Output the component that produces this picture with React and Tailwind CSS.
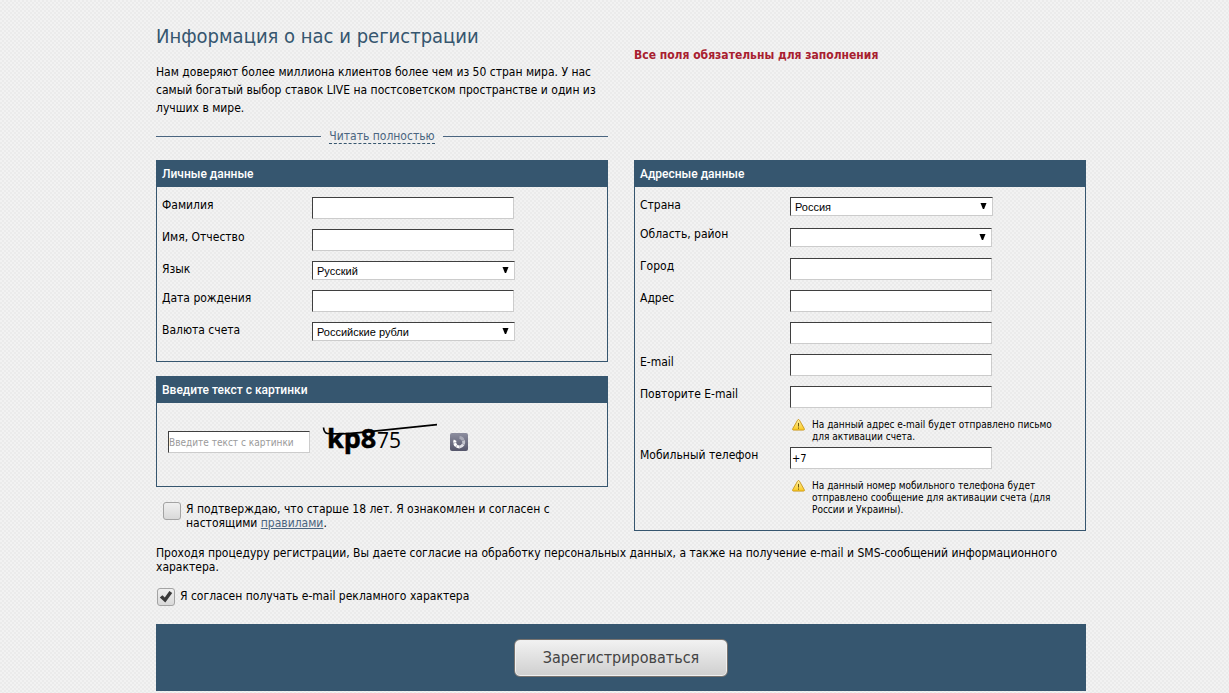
import React, { useState } from 'react';

const boxClass = 'block bg-white border border-t-[#3f3f3f] border-l-[#3f3f3f] border-r-[#cccccc] border-b-[#cccccc] outline-none';

function Panel({ title, className = '', children }) {
    return (
        <section className={`border border-[#36566f] ${className}`}>
            <h2 className="h-[26px] bg-[#36566f] px-[5px] text-xs leading-[26px] font-medium text-white font-['Roboto',sans-serif]">
                {title}
            </h2>
            {children}
        </section>
    );
}

function Row({ id, label, hint, children }) {
    return (
        <div className="flex items-start px-[5px]">
            <label htmlFor={id} className="w-[150px] shrink-0 leading-4">
                {label}
            </label>
            <div className="min-w-0 flex-1">
                <div className="mb-[10px]">{children}</div>
                {hint && <Hint>{hint}</Hint>}
            </div>
        </div>
    );
}

function TextInput(props) {
    return <input type="text" className={`${boxClass} h-[22px] w-[202px] px-px text-[11px]`} {...props} />;
}

function Select({ id, options, className = 'w-[203px]' }) {
    return (
        <div className={`relative ${className}`}>
            <select
                id={id}
                className={`${boxClass} h-[19px] w-full appearance-none px-1 text-[11px] leading-4 text-black font-['Liberation_Sans',sans-serif]`}
            >
                {options.map(option => (
                    <option key={option}>{option}</option>
                ))}
            </select>
            <svg className="pointer-events-none absolute top-[6px] right-[6px]" width="7" height="6" viewBox="0 0 7 6">
                <path d="M.5 0h6L4.100 6H2.900z" fill="#000" />
            </svg>
        </div>
    );
}

function Hint({ children }) {
    return (
        <div className="flex items-start pt-px pb-1 pl-[2px]">
            <svg className="mr-[7px] shrink-0" width="13" height="12" viewBox="0 0 13 12">
                <defs>
                    <linearGradient id="warn" x1="0" y1="0" x2="0" y2="1">
                        <stop offset="0" stopColor="#fff3a8" />
                        <stop offset="1" stopColor="#f9c81c" />
                    </linearGradient>
                </defs>
                <path
                    d="M6.5.5c.4 0 .7.2.9.6l4.900 8.600c.4.8 0 1.400-.8 1.400H1.500c-.8 0-1.200-.6-.8-1.400l4.900-8.600c.2-.4.5-.6.900-.6z"
                    fill="url(#warn)"
                    stroke="#c9951a"
                    strokeWidth=".9"
                />
                <path d="M6.500 3.900v3.600M6.500 8.500v1.200" stroke="#6b5412" strokeWidth="1" />
            </svg>
            <p className="max-w-[245px] text-[10px] leading-3">{children}</p>
        </div>
    );
}

function Checkbox({ id, checked, onChange }) {
    return (
        <span className="relative block size-[18px] shrink-0">
            <input
                id={id}
                type="checkbox"
                checked={checked}
                onChange={e => onChange(e.target.checked)}
                className="block size-[18px] appearance-none rounded-[3px] border border-[#a3a3a3] bg-linear-to-b from-[#f0f0f0] to-[#d9d9d9]"
            />
            {checked && (
                <svg className="pointer-events-none absolute inset-0" width="18" height="18" viewBox="0 0 18 18">
                    <path d="M2.800 9.500l2.600-2.300 2.400 2.300L12.400 3l2.800 2-6.900 9.600z" fill="#3a3a3a" />
                </svg>
            )}
        </span>
    );
}

function Captcha() {
    return (
        <svg className="overflow-visible" width="120" height="40" viewBox="0 0 120 40" role="img" aria-label="kp875">
            <text x="7" y="25" fontSize="27" fontWeight="700" fontFamily="'Open Sans', sans-serif" stroke="#000" strokeWidth=".5">kp8</text>
            <text x="57" y="25" fontSize="21" fontFamily="'Open Sans', sans-serif">75</text>
            <path d="M3.500 4.500c.3 3 1.500 5.700 4 6 8 .8 22 .2 32-.8L117 1.700" fill="none" stroke="#000" strokeWidth="1.700" />
        </svg>
    );
}

function RefreshIcon() {
    return (
        <svg width="18" height="18" viewBox="0 0 18 18">
            <defs>
                <linearGradient id="refresh" x1="0" y1="0" x2="0" y2="1">
                    <stop offset="0" stopColor="#8d8e9f" />
                    <stop offset="1" stopColor="#55566b" />
                </linearGradient>
            </defs>
            <rect width="18" height="18" rx="2" fill="url(#refresh)" />
            <g fill="none" strokeWidth="3">
                <path d="M9.500 4.600a4.600 4.600 0 0 1 3.700 2.600" stroke="#a9aab7" />
                <path d="M13.400 7.500a4.700 4.700 0 0 1 0 3.600" stroke="#c3c4cd" />
                <path d="M13.200 11.400A4.600 4.600 0 0 1 9.500 13.900" stroke="#e0e0e6" />
                <path d="M9.500 13.900A4.600 4.600 0 0 1 5.200 7.200" stroke="#fff" strokeDasharray="3 .5" />
            </g>
        </svg>
    );
}

export default function App() {
    const [adult, setAdult] = useState(false);
    const [promo, setPromo] = useState(true);

    return (
        <div className="min-h-screen bg-[#f2f2f2] bg-[repeating-conic-gradient(#ebebeb_0_25%,#f2f2f2_0_50%)] bg-size-[4px_4px] pl-[13px] text-xs text-black font-['DejaVu_Sans_Condensed','Open_Sans',sans-serif]">
            <form className="mx-auto max-w-[930px] pt-[22px]" onSubmit={e => e.preventDefault()}>
                <div className="grid grid-cols-2 gap-x-[26px]">
                    <header>
                        <h1 className="text-xl leading-7 text-[#36566f]">Информация о нас и регистрации</h1>
                        <p className="mt-[13px] leading-[18px]">
                            Нам доверяют более миллиона клиентов более чем из 50 стран мира. У нас самый богатый выбор ставок LIVE
                            на постсоветском пространстве и один из лучших в мире.
                        </p>
                        <div className="mt-3 flex items-center gap-2">
                            <span className="h-px flex-1 bg-[#4a6580]" />
                            <a href="#more" className="border-b border-dashed border-[#36566f] leading-[14px] text-[#4a6580]">
                                Читать полностью
                            </a>
                            <span className="h-px flex-1 bg-[#4a6580]" />
                        </div>
                    </header>
                    <p className="pt-[25px] leading-4 font-bold text-[#a8202f]">Все поля обязательны для заполнения</p>
                </div>

                <div className="mt-4 grid grid-cols-2 items-start gap-x-[26px]">
                    <div>
                        <Panel title="Личные данные">
                            <div className="py-[10px]">
                                <Row id="surname" label="Фамилия"><TextInput id="surname" /></Row>
                                <Row id="name" label="Имя, Отчество"><TextInput id="name" /></Row>
                                <Row id="lang" label="Язык"><Select id="lang" options={['Русский']} /></Row>
                                <Row id="birth" label="Дата рождения"><TextInput id="birth" /></Row>
                                <Row id="currency" label="Валюта счета"><Select id="currency" options={['Российские рубли']} /></Row>
                            </div>
                        </Panel>

                        <Panel title="Введите текст с картинки" className="mt-[14px]">
                            <div className="flex items-start px-[11px] pt-5 pb-[23px]">
                                <input
                                    type="text"
                                    aria-label="Введите текст с картинки"
                                    placeholder="Введите текст с картинки"
                                    className={`${boxClass} mt-2 mr-[10px] h-[22px] w-[142px] text-[10px] placeholder:text-[#9a9a9a]`}
                                />
                                <Captcha />
                                <button type="button" aria-label="Обновить" className="mt-[10px] ml-[10px] block">
                                    <RefreshIcon />
                                </button>
                            </div>
                        </Panel>

                        <div className="mt-[15px] flex gap-[5px] pl-[7px]">
                            <Checkbox id="adult" checked={adult} onChange={setAdult} />
                            <label htmlFor="adult" className="max-w-[380px] leading-[14px]">
                                Я подтверждаю, что старше 18 лет. Я ознакомлен и согласен с настоящими{' '}
                                <a href="#rules" className="text-[#4a6580] underline">правилами</a>.
                            </label>
                        </div>
                    </div>

                    <Panel title="Адресные данные">
                        <div className="py-[10px]">
                            <Row id="country" label="Страна"><Select id="country" options={['Россия']} /></Row>
                            <Row id="region" label="Область, район">
                                <div className="flex h-[22px] items-center">
                                    <Select id="region" options={['']} className="w-[202px]" />
                                </div>
                            </Row>
                            <Row id="city" label="Город"><TextInput id="city" /></Row>
                            <Row id="address" label="Адрес">
                                <TextInput id="address" />
                                <div className="mt-[10px]"><TextInput aria-label="Адрес" /></div>
                            </Row>
                            <Row id="email" label="E-mail"><TextInput id="email" /></Row>
                            <Row
                                id="email2"
                                label="Повторите E-mail"
                                hint="На данный адрес e-mail будет отправлено письмо для активации счета."
                            >
                                <TextInput id="email2" />
                            </Row>
                            <Row
                                id="phone"
                                label="Мобильный телефон"
                                hint="На данный номер мобильного телефона будет отправлено сообщение для активации счета (для России и Украины)."
                            >
                                <TextInput id="phone" defaultValue="+7" />
                            </Row>
                        </div>
                    </Panel>
                </div>

                <p className="mt-[15px] leading-[14px]">
                    Проходя процедуру регистрации, Вы даете согласие на обработку персональных данных, а также на получение
                    e-mail и SMS-сообщений информационного характера.
                </p>

                <div className="mt-[14px] flex gap-[5px] pl-px">
                    <Checkbox id="promo" checked={promo} onChange={setPromo} />
                    <label htmlFor="promo" className="leading-4">Я согласен получать e-mail рекламного характера</label>
                </div>

                <div className="mt-[18px] bg-[#36566f] pt-[15px] pb-[14px] text-center">
                    <button
                        type="submit"
                        className="h-[38px] w-[214px] rounded-md border border-[#77736f] bg-linear-to-b from-[#f2f2f2] to-[#cfcfcf] text-base text-[#444] shadow-[inset_0_0_0_1px_#f0f0f0]"
                    >
                        Зарегистрироваться
                    </button>
                </div>
            </form>
        </div>
    );
}
